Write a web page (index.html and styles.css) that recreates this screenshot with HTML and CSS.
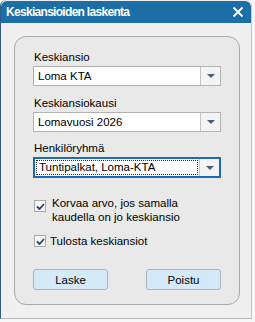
FILE: index.html
```html
<!DOCTYPE html>
<html lang="fi">
<head>
  <meta charset="UTF-8" />
  <title>Keskiansioiden laskenta</title>
  <link rel="stylesheet" href="styles.css">
</head>
<body>

  <div class="window">
    <div class="titlebar">
      <span class="title">Keskiansioiden laskenta</span>
      <svg class="close" width="12" height="12" viewBox="0 0 12 12">
        <path d="M1.5 1.5 L10.5 10.5 M10.5 1.5 L1.5 10.5" stroke="#fff" stroke-width="1.8" fill="none"/>
      </svg>
    </div>

    <div class="body">
      <div class="panel">
        <div class="field-label first">Keskiansio</div>
        <div class="combo">
          <div class="combo-value">Loma KTA</div>
          <div class="combo-btn"><span class="arrow"></span></div>
        </div>

        <div class="field-label">Keskiansiokausi</div>
        <div class="combo">
          <div class="combo-value">Lomavuosi 2026</div>
          <div class="combo-btn"><span class="arrow"></span></div>
        </div>

        <div class="field-label third">Henkilöryhmä</div>
        <div class="combo focused">
          <div class="combo-value"><span class="focus-rect">Tuntipalkat, Loma-KTA</span></div>
          <div class="combo-btn"><span class="arrow"></span></div>
        </div>

        <div class="check-row two-line">
          <span class="checkbox"><svg width="9" height="7" viewBox="0 0 9 7"><path d="M1 3.5 L3.5 6 L8 1" stroke="#27406e" stroke-width="1.8" fill="none"/></svg></span>
          <span class="check-text">Korvaa arvo, jos samalla<br>kaudella on jo keskiansio</span>
        </div>

        <div class="check-row single">
          <span class="checkbox"><svg width="9" height="7" viewBox="0 0 9 7"><path d="M1 3.5 L3.5 6 L8 1" stroke="#27406e" stroke-width="1.8" fill="none"/></svg></span>
          <span class="check-text">Tulosta keskiansiot</span>
        </div>

        <div class="buttons">
          <button class="btn">Laske</button>
          <button class="btn">Poistu</button>
        </div>
      </div>
    </div>
  </div>

</body>
</html>
```

FILE: styles.css
```css
body {
  margin: 0;
  padding: 0;
  background: #f7f7f7;
  font-family: 'Liberation Sans', Arial, sans-serif;
  color: #000;
}
.window {
  width: 252px;
  height: 319px;
  background: #f0f0f0;
  border-left: 1px solid #2f5a86;
  border-right: 1px solid #c8c8c8;
  border-bottom: 1px solid #b8b8b8;
  border-radius: 6px 6px 0 0;
  box-sizing: border-box;
  overflow: hidden;
}
.titlebar {
  height: 22px;
  margin-top: 1px;
  background: #1c6ea6;
  border-radius: 6px 6px 0 0;
  display: flex;
  align-items: center;
  justify-content: space-between;
  padding: 0 6px 0 5px;
}
.title {
  color: #fff;
  font-weight: 700;
  font-size: 12px;
  letter-spacing: -0.7px;
}
.close {
  display: block;
  margin-right: 1px;
}
.body {
  padding: 13px 11px 0 13px;
}
.panel {
  height: 269px;
  box-sizing: border-box;
  background: #e9e9e9;
  border: 1px solid #a8a8a8;
  border-radius: 12px;
  padding: 0 18px 0 18px;
}
.field-label {
  font-size: 11.5px;
  line-height: 14px;
  margin-top: 10px;
  margin-bottom: 2px;
  padding-left: 1px;
}
.field-label.first {
  margin-top: 13px;
}
.field-label.third {
  margin-top: 9px;
}
.combo {
  display: flex;
  height: 20px;
  box-sizing: border-box;
  border: 1px solid #b3b3b3;
  background: #fff;
}
.combo.focused {
  border: 2px solid #1a6db4;
  height: 21px;
}
.combo-value {
  flex: 1;
  font-size: 11.5px;
  line-height: 18px;
  padding-left: 4px;
  white-space: nowrap;
  overflow: hidden;
}
.focused .combo-value {
  padding: 1px 1px 1px 1px;
  line-height: 15px;
}
.focus-rect {
  display: block;
  border: 1px dotted #333;
  padding-left: 2px;
  line-height: 13px;
}
.combo-btn {
  width: 19px;
  border-left: 1px solid #c4c4c4;
  background: #f4f4f4;
  display: flex;
  align-items: center;
  justify-content: center;
}
.arrow {
  width: 0;
  height: 0;
  border-left: 4px solid transparent;
  border-right: 4px solid transparent;
  border-top: 4px solid #4a5c82;
}
.check-row {
  display: flex;
  align-items: flex-start;
  font-size: 11.5px;
  line-height: 14px;
  padding-left: 1px;
}
.check-row.two-line {
  margin-top: 18px;
}
.check-row.two-line .checkbox {
  margin-top: 4px;
  margin-right: 6px;
}
.check-row.single {
  margin-top: 10px;
}
.check-row.single .checkbox {
  margin-top: 1px;
  margin-right: 4px;
}
.checkbox {
  width: 12px;
  height: 12px;
  box-sizing: border-box;
  border: 1px solid #a9a9a9;
  background: #f7f7f7;
  display: flex;
  align-items: center;
  justify-content: center;
  flex: none;
}
.buttons {
  display: flex;
  justify-content: space-between;
  margin-top: 21px;
}
.btn {
  width: 75px;
  height: 21px;
  font-family: 'Liberation Sans', Arial, sans-serif;
  font-size: 11.5px;
  color: #000;
  background: #d5eaf9;
  border: 1px solid #a9b4bf;
  border-radius: 3px;
  padding: 0;
}
```
